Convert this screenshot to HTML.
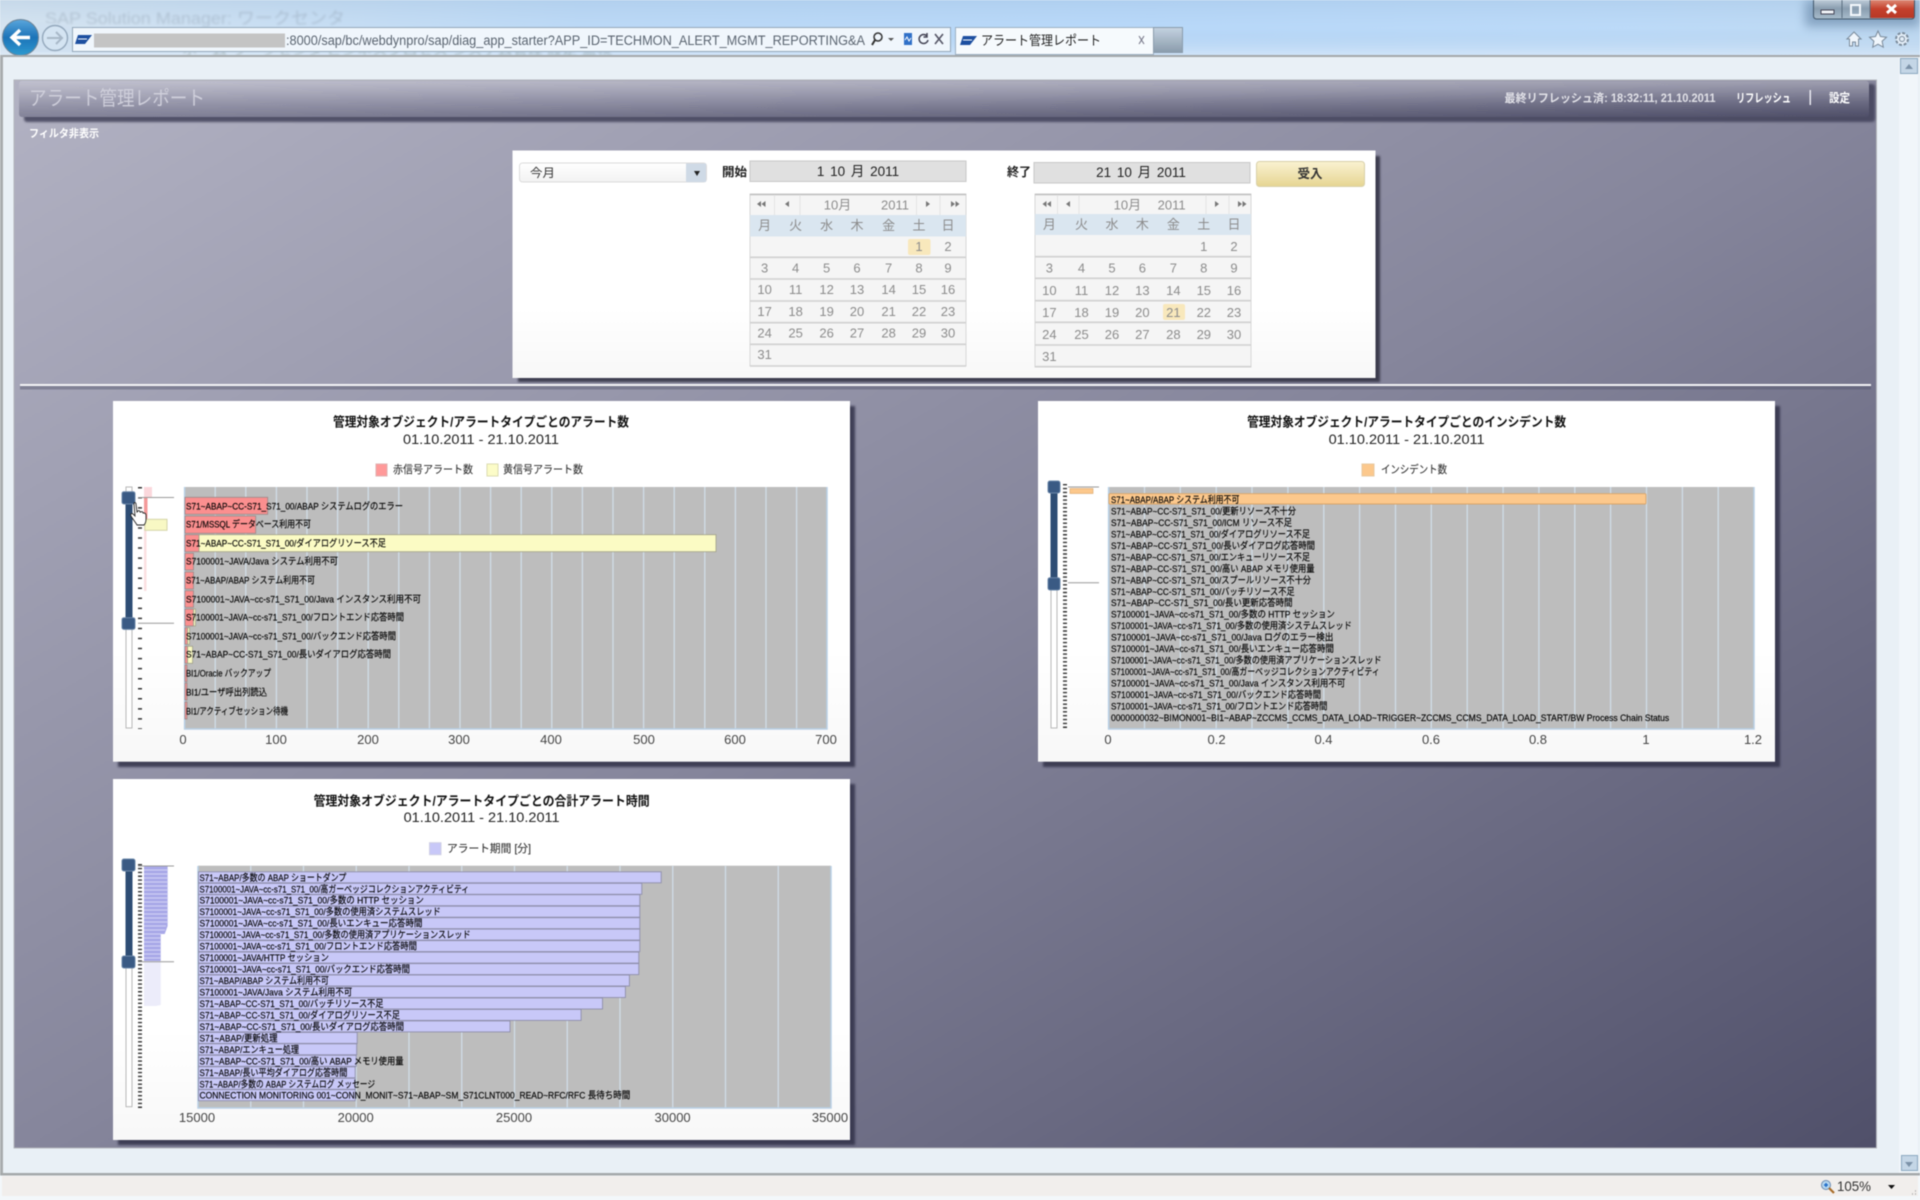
<!DOCTYPE html>
<html lang="ja">
<head>
<meta charset="utf-8">
<title>アラート管理レポート</title>
<style>
html,body{margin:0;padding:0;width:1920px;height:1200px;overflow:hidden;background:#f2f6fa}
svg{display:block;filter:blur(.5px);font-family:"Liberation Sans","Noto Sans CJK JP",sans-serif}
.lab text{font-size:9.5px;fill:#000;stroke:#000;stroke-width:.14}
.ax text{font-size:13px;fill:#444;text-anchor:middle}
.cal text{font-size:13px;fill:#8c8c8c;text-anchor:middle}
.ttl{font-size:13px;font-weight:bold;fill:#111;text-anchor:middle}
.dt{font-size:13.5px;fill:#222;text-anchor:middle}
.lg{font-size:11px;fill:#333;stroke:#333;stroke-width:.12}
</style>
</head>
<body>
<svg xmlns="http://www.w3.org/2000/svg" width="1920" height="1200" viewBox="0 0 1920 1200">
<defs>
<linearGradient id="sky" x1="0" y1="0" x2="1" y2="0"><stop offset="0" stop-color="#d6e4f0"/><stop offset=".3" stop-color="#bcd9f6"/><stop offset=".6" stop-color="#b8d8f9"/><stop offset=".85" stop-color="#bcdaf8"/><stop offset="1" stop-color="#c0daf2"/></linearGradient>
<linearGradient id="skyv" x1="0" y1="0" x2="0" y2="1"><stop offset="0" stop-color="#8fb0d0" stop-opacity=".22"/><stop offset=".5" stop-color="#9fc0e0" stop-opacity="0"/><stop offset="1" stop-color="#e6f0fb" stop-opacity=".55"/></linearGradient>
<linearGradient id="panel" x1="0" y1="0" x2="1" y2="1"><stop offset="0" stop-color="#b2b2c3"/><stop offset=".5" stop-color="#86869c"/><stop offset="1" stop-color="#50506a"/></linearGradient>
<linearGradient id="bar" x1="0" y1="0" x2="0" y2="1"><stop offset="0" stop-color="#fff" stop-opacity=".2"/><stop offset=".55" stop-color="#fff" stop-opacity=".04"/><stop offset="1" stop-color="#000" stop-opacity=".02"/></linearGradient>
<linearGradient id="card" x1="0" y1="0" x2="0" y2="1"><stop offset="0" stop-color="#fff"/><stop offset=".7" stop-color="#fff"/><stop offset="1" stop-color="#f8f8f8"/></linearGradient>
<linearGradient id="btn" x1="0" y1="0" x2="0" y2="1"><stop offset="0" stop-color="#faf2d2"/><stop offset="1" stop-color="#e6d592"/></linearGradient>
<linearGradient id="back" x1="0" y1="0" x2="0" y2="1"><stop offset="0" stop-color="#5aa6dc"/><stop offset=".5" stop-color="#1c74b8"/><stop offset="1" stop-color="#2e9ad0"/></linearGradient>
<linearGradient id="stub" x1="0" y1="0" x2="0" y2="1"><stop offset="0" stop-color="#c4d2e0"/><stop offset="1" stop-color="#8a9cac"/></linearGradient>
<linearGradient id="close" x1="0" y1="0" x2="0" y2="1"><stop offset="0" stop-color="#dc8874"/><stop offset=".5" stop-color="#c4402c"/><stop offset="1" stop-color="#b83826"/></linearGradient>
<linearGradient id="winb" x1="0" y1="0" x2="0" y2="1"><stop offset="0" stop-color="#c8d6e2"/><stop offset=".5" stop-color="#8a9eb0"/><stop offset="1" stop-color="#a8bccc"/></linearGradient>
<linearGradient id="sel" x1="0" y1="0" x2="0" y2="1"><stop offset="0" stop-color="#fff"/><stop offset="1" stop-color="#f2f2f2"/></linearGradient>
<filter id="b1" x="-10%" y="-10%" width="120%" height="120%"><feGaussianBlur stdDeviation="2"/></filter>
<filter id="b2" x="-20%" y="-100%" width="140%" height="300%"><feGaussianBlur stdDeviation="1.1"/></filter>
<filter id="b3" x="-50%" y="-50%" width="200%" height="200%"><feGaussianBlur stdDeviation="5"/></filter>
</defs>

<!-- browser chrome -->
<rect width="1920" height="56" fill="url(#sky)"/>
<rect width="1920" height="56" fill="url(#skyv)"/>
<text x="45" y="24" font-size="17" fill="#7c8a9a" opacity=".32" filter="url(#b2)" textLength="300" lengthAdjust="spacingAndGlyphs">SAP Solution Manager: ワークセンタ</text>
<text x="182" y="55" font-size="13" fill="#5a6a5a" opacity=".35" filter="url(#b2)" textLength="430" lengthAdjust="spacingAndGlyphs">ホーム  ワークセンタ  ビジネスプロセス  システム管理  設定  監視</text>
<rect x="1805" y="0" width="115" height="27" fill="#5a7a9c" opacity=".55" filter="url(#b3)"/>
<g>
<rect x="1813.500" y="-2" width="101" height="21" rx="3" fill="url(#winb)" stroke="#42586c"/>
<rect x="1870" y="0" width="44" height="18" fill="url(#close)"/>
<path d="M1842 0v18M1870 0v18" stroke="#5a6e80"/>
<rect x="1821" y="10" width="13" height="4" fill="#f0f4f8" stroke="#445"/>
<rect x="1851" y="5" width="9" height="10" fill="none" stroke="#f4f8fc" stroke-width="2"/>
<path d="M1887 5l9 8M1896 5l-9 8" stroke="#fff" stroke-width="3"/>
</g>
<!-- nav buttons -->
<path d="M38 22Q60 24 73 27V52H30z" fill="#cfe0f0" opacity=".7"/>
<circle cx="20.500" cy="37.500" r="18" fill="url(#back)" stroke="#6f8496"/>
<path d="M30 37.500H14M20 30l-8 7.500 8 7.500" fill="none" stroke="#fff" stroke-width="3.400"/>
<circle cx="55" cy="38" r="12.500" fill="#d4e4f2" stroke="#94a8bc" stroke-width="1.400"/>
<path d="M47 38H62M56 32l6 6-6 6" fill="none" stroke="#a8b8c8" stroke-width="2"/>
<!-- address bar -->
<rect x="72.500" y="27.500" width="878" height="24" fill="#f0f6fc" stroke="#94a8ba"/>
<path d="M75 44l3-9h14l-7 9z" fill="#1c4fa0"/>
<path d="M78 39h9" stroke="#fff"/>
<rect x="94" y="33.500" width="191" height="14" fill="#c4c4c4"/>
<text x="286" y="45" font-size="13.500" fill="#5a6470" textLength="579" lengthAdjust="spacingAndGlyphs">:8000/sap/bc/webdynpro/sap/diag_app_starter?APP_ID=TECHMON_ALERT_MGMT_REPORTING&amp;A</text>
<circle cx="878" cy="37" r="4" fill="none" stroke="#333" stroke-width="1.500"/><path d="M875 40l-3 5" stroke="#333" stroke-width="2"/>
<path d="M888 38h6l-3 3z" fill="#555"/>
<rect x="904" y="33" width="8" height="12" fill="#3070c8"/>
<path d="M905 40l2-3 2 4 2-3" stroke="#fff" fill="none"/>
<path d="M927 36a4.500 4.500 0 1 0 1 4M927 33v4h-3.500" fill="none" stroke="#445" stroke-width="1.500"/>
<path d="M935 34l8 10M943 34l-8 10" stroke="#556" stroke-width="1.600"/>
<!-- tab -->
<rect x="955.500" y="27.500" width="198" height="27" fill="#f6fafd" stroke="#9cb0c4"/>
<rect x="1153.500" y="27.500" width="29" height="25" fill="url(#stub)" stroke="#8a9cac"/>
<path d="M960 45l3-9h14l-7 9z" fill="#1c4fa0"/><path d="M963 40h9" stroke="#fff"/>
<text x="981" y="45" font-size="13" fill="#222" textLength="120" lengthAdjust="spacingAndGlyphs">アラート管理レポート</text>
<path d="M1139 36l5 8M1144 36l-5 8" stroke="#778" stroke-width="1.100"/>
<!-- right icons -->
<path d="M1854 32l-7 7h2.500v7h3v-4h3v4h3v-7h2.500z" fill="#f0f6fc" stroke="#7a8a9a"/>
<path d="M1878 31l2.500 5.500 6 .7-4.400 4 1.200 6-5.300-3-5.300 3 1.200-6-4.400-4 6-.7z" fill="#f0f6fc" stroke="#7a8a9a"/>
<circle cx="1902" cy="39" r="6" fill="#e4eef8" stroke="#7a8a9a" stroke-width="2" stroke-dasharray="3 1.700"/><circle cx="1902" cy="39" r="2.500" fill="none" stroke="#7a8a9a"/>

<!-- content area -->
<rect x="0" y="56" width="1920" height="1118" fill="#e9f0f6"/>
<rect x="0" y="55" width="1920" height="2" fill="#a4a8aa"/>
<rect x="0" y="55" width="3" height="1120" fill="#a8acae"/>
<rect x="0" y="1173" width="1920" height="2.500" fill="#a4a8aa"/>
<rect x="1899" y="57" width="19" height="1116" fill="#f1f6fa"/>
<rect x="1900.500" y="58.500" width="17" height="15" fill="#c4d6e6" stroke="#8ca8c0"/>
<path d="M1905 69l4-5 4 5z" fill="#7c92a8"/>
<rect x="1901.500" y="1155.500" width="16" height="15" fill="#c4d6e6" stroke="#8ca8c0"/>
<path d="M1905 1162l4 5 4-5z" fill="#7c92a8"/>
<!-- status bar -->
<rect x="0" y="1175.500" width="1920" height="24.500" fill="#f3f7fa"/>
<rect x="2" y="1176" width="1916" height="20" fill="#f1eeec"/>
<circle cx="1826" cy="1185" r="4.500" fill="#b8d8f0" stroke="#6a8ab0"/><path d="M1824 1185h4M1826 1183v4" stroke="#1c6ac8" stroke-width="1.500"/><path d="M1829 1188l5 5" stroke="#a86c28" stroke-width="2.200"/>
<text x="1837" y="1191" font-size="14" fill="#333" textLength="34" lengthAdjust="spacingAndGlyphs">105%</text>
<path d="M1888 1185h7l-3.500 4z" fill="#111"/>
<path d="M1912 1194h1M1915 1194h1M1915 1191h1" stroke="#aaa" stroke-width="1.500"/>

<!-- main panel -->
<rect x="14" y="80" width="1862.500" height="1068" fill="url(#panel)" stroke="#b4b6bc" stroke-width="1"/>
<rect x="24" y="84" width="1851" height="38" rx="3" fill="#42425a" opacity=".85" filter="url(#b2)"/>
<rect x="19" y="81" width="1850" height="36" rx="3" fill="url(#panel)"/>
<rect x="19" y="81" width="1850" height="36" rx="3" fill="url(#bar)"/>
<text x="29" y="105" font-size="20" fill="#cfcfdb" textLength="176" lengthAdjust="spacingAndGlyphs">アラート管理レポート</text>
<text x="1504.500" y="102" font-size="11.500" font-weight="bold" fill="#e2e2e8" textLength="211" lengthAdjust="spacingAndGlyphs">最終リフレッシュ済: 18:32:11, 21.10.2011</text>
<text x="1736" y="102" font-size="12" font-weight="bold" fill="#fff" textLength="55" lengthAdjust="spacingAndGlyphs">リフレッシュ</text>
<rect x="1809.500" y="90" width="1.500" height="15" fill="#e8e8f0"/>
<text x="1829" y="102" font-size="12" font-weight="bold" fill="#fff" textLength="21" lengthAdjust="spacingAndGlyphs">設定</text>
<text x="29" y="137" font-size="11" font-weight="bold" fill="#fff" textLength="70" lengthAdjust="spacingAndGlyphs">フィルタ非表示</text>

<!-- filter card -->
<rect x="518" y="156" width="862" height="226" fill="#2e2e40" opacity=".85" filter="url(#b2)"/>
<rect x="512.500" y="150.500" width="863" height="227.500" fill="url(#card)"/>
<rect x="519.500" y="163" width="187" height="19" rx="3" fill="url(#sel)" stroke="#dcdcdc"/>
<rect x="686" y="163.500" width="20" height="18.500" fill="#cfdae6"/>
<path d="M694 171h6l-3 5z" fill="#222"/>
<text x="530" y="177" font-size="12" fill="#333" textLength="25" lengthAdjust="spacingAndGlyphs">今月</text>
<text x="722" y="176" font-size="12" font-weight="bold" fill="#222" textLength="25" lengthAdjust="spacingAndGlyphs">開始</text>
<rect x="750" y="161" width="216" height="20.500" fill="#e0e0e0" stroke="#c8c8c8"/>
<text x="858" y="176" font-size="13.500" fill="#222" text-anchor="middle" style="word-spacing:2px">1 10 月 2011</text>
<text x="1007" y="176" font-size="12" font-weight="bold" fill="#222" textLength="24" lengthAdjust="spacingAndGlyphs">終了</text>
<rect x="1034" y="162.500" width="216" height="20.500" fill="#e0e0e0" stroke="#c8c8c8"/>
<text x="1141" y="177" font-size="13.500" fill="#222" text-anchor="middle" style="word-spacing:2px">21 10 月 2011</text>
<rect x="1256.500" y="161.500" width="108" height="25" rx="3" fill="url(#btn)" stroke="#d8d0a8"/>
<text x="1310" y="178" font-size="12.500" font-weight="bold" fill="#333" text-anchor="middle">受入</text>

<!-- calendar 1 -->
<g class="cal">
<rect x="750" y="194" width="216" height="172" fill="#f5f5f5" stroke="#d8d8d8"/>
<rect x="750" y="215" width="216" height="21.500" fill="#dae6f0"/>
<path d="M750 194.500H966" stroke="#c0c0c0" stroke-width="1.500"/>
<path d="M750 257.300H966M750 279H966M750 301H966M750 322.700H966M750 344.300H966M750 366H966" stroke="#d0d0d0" stroke-width="1.600"/>
<path d="M774.500 195v20M800 195v20M916.500 195v20M940 195v20" stroke="#e4e4e4"/>
<rect x="908" y="239" width="22.500" height="16" rx="2" fill="#f8e8bc"/>
<path d="M761 201v6l-4-3zM765.500 201v6l-4-3zM789 201v6l-4-3zM926 201v6l4-3zM951 201v6l4-3zM955.500 201v6l4-3z" fill="#777"/>
<text x="837.500" y="209.500">10月</text><text x="895" y="209.500">2011</text>
<text y="230"><tspan x="764.600">月</tspan><tspan x="795.600">火</tspan><tspan x="826.600">水</tspan><tspan x="857">木</tspan><tspan x="888.600">金</tspan><tspan x="919">土</tspan><tspan x="948">日</tspan></text>
<text y="251"><tspan x="919">1</tspan><tspan x="948">2</tspan></text>
<text y="272.500"><tspan x="764.600">3</tspan><tspan x="795.600">4</tspan><tspan x="826.600">5</tspan><tspan x="857">6</tspan><tspan x="888.600">7</tspan><tspan x="919">8</tspan><tspan x="948">9</tspan></text>
<text y="294"><tspan x="764.600">10</tspan><tspan x="795.600">11</tspan><tspan x="826.600">12</tspan><tspan x="857">13</tspan><tspan x="888.600">14</tspan><tspan x="919">15</tspan><tspan x="948">16</tspan></text>
<text y="316"><tspan x="764.600">17</tspan><tspan x="795.600">18</tspan><tspan x="826.600">19</tspan><tspan x="857">20</tspan><tspan x="888.600">21</tspan><tspan x="919">22</tspan><tspan x="948">23</tspan></text>
<text y="337.500"><tspan x="764.600">24</tspan><tspan x="795.600">25</tspan><tspan x="826.600">26</tspan><tspan x="857">27</tspan><tspan x="888.600">28</tspan><tspan x="919">29</tspan><tspan x="948">30</tspan></text>
<text y="359"><tspan x="764.600">31</tspan></text>
</g>
<!-- calendar 2 -->
<g class="cal">
<rect x="1035" y="194" width="216" height="173" fill="#f5f5f5" stroke="#d8d8d8"/>
<rect x="1035" y="214" width="216" height="21" fill="#dae6f0"/>
<path d="M1035 194.500H1251" stroke="#c0c0c0" stroke-width="1.500"/>
<path d="M1035 256.700H1251M1035 278.300H1251M1035 300.700H1251M1035 322.300H1251M1035 345H1251M1035 366.700H1251" stroke="#d0d0d0" stroke-width="1.600"/>
<path d="M1057.500 195v19M1079 195v19M1206 195v19M1229 195v19" stroke="#e4e4e4"/>
<rect x="1163" y="304" width="22" height="16" rx="2" fill="#f8e8bc"/>
<path d="M1046.500 201v6l-4-3zM1051 201v6l-4-3zM1070 201v6l-4-3zM1215 201v6l4-3zM1238 201v6l4-3zM1242.500 201v6l4-3z" fill="#777"/>
<text x="1127.400" y="209.500">10月</text><text x="1171.600" y="209.500">2011</text>
<text y="229"><tspan x="1049.400">月</tspan><tspan x="1081.500">火</tspan><tspan x="1112">水</tspan><tspan x="1142.400">木</tspan><tspan x="1173.400">金</tspan><tspan x="1203.800">土</tspan><tspan x="1234">日</tspan></text>
<text y="251"><tspan x="1203.800">1</tspan><tspan x="1234">2</tspan></text>
<text y="272.500"><tspan x="1049.400">3</tspan><tspan x="1081.500">4</tspan><tspan x="1112">5</tspan><tspan x="1142.400">6</tspan><tspan x="1173.400">7</tspan><tspan x="1203.800">8</tspan><tspan x="1234">9</tspan></text>
<text y="295"><tspan x="1049.400">10</tspan><tspan x="1081.500">11</tspan><tspan x="1112">12</tspan><tspan x="1142.400">13</tspan><tspan x="1173.400">14</tspan><tspan x="1203.800">15</tspan><tspan x="1234">16</tspan></text>
<text y="317"><tspan x="1049.400">17</tspan><tspan x="1081.500">18</tspan><tspan x="1112">19</tspan><tspan x="1142.400">20</tspan><tspan x="1173.400">21</tspan><tspan x="1203.800">22</tspan><tspan x="1234">23</tspan></text>
<text y="339"><tspan x="1049.400">24</tspan><tspan x="1081.500">25</tspan><tspan x="1112">26</tspan><tspan x="1142.400">27</tspan><tspan x="1173.400">28</tspan><tspan x="1203.800">29</tspan><tspan x="1234">30</tspan></text>
<text y="361"><tspan x="1049.400">31</tspan></text>
</g>

<!-- divider -->
<rect x="20" y="385.500" width="1851" height="4" fill="#55566c" opacity=".45"/>
<rect x="20" y="384" width="1851" height="2" fill="#f4f4f6"/>

<!-- chart 1 -->
<rect x="118" y="406" width="737" height="361" fill="#30304a" opacity=".85" filter="url(#b2)"/>
<rect x="113" y="401" width="737" height="360.700" fill="url(#card)"/>
<text class="ttl" x="481" y="426.500" textLength="296" lengthAdjust="spacingAndGlyphs">管理対象オブジェクト/アラートタイプごとのアラート数</text>
<text class="dt" x="481" y="444" textLength="156" lengthAdjust="spacingAndGlyphs">01.10.2011 - 21.10.2011</text>
<rect x="376" y="464" width="11" height="12" fill="#f99" stroke="#e0b0b0"/>
<text class="lg" x="393" y="473" textLength="80" lengthAdjust="spacingAndGlyphs">赤信号アラート数</text>
<rect x="487" y="464" width="11" height="12" fill="#fcfcc8" stroke="#dcdcb0"/>
<text class="lg" x="503" y="473" textLength="80" lengthAdjust="spacingAndGlyphs">黄信号アラート数</text>
<rect x="184.600" y="487" width="642.400" height="242" fill="#bdbdbd"/>
<path d="M215.200 487V729M245.800 487V729M276.400 487V729M307 487V729M337.600 487V729M368.200 487V729M398.800 487V729M429.400 487V729M460 487V729M490.600 487V729M521.200 487V729M551.800 487V729M582.400 487V729M613 487V729M643.600 487V729M674.200 487V729M704.800 487V729M735.400 487V729M766 487V729M796.600 487V729" stroke="#d0dde8" stroke-width="1.300"/>
<path d="M184.600 487V729H827V487" fill="none" stroke="#b8d0e6" stroke-width="1.500"/>
<g stroke="#9a8888" stroke-width=".8" fill="#fb8f8f">
<rect x="185" y="497.300" width="82.700" height="17"/><rect x="185" y="516" width="70.700" height="17.300"/><rect x="185" y="534.700" width="14" height="17"/><rect x="185" y="553.300" width="8.500" height="16.700"/><rect x="185" y="572" width="8.500" height="17"/><rect x="185" y="590.700" width="8.500" height="16.600"/><rect x="185" y="609" width="8.500" height="17"/><rect x="185" y="627.700" width="2.600" height="16.600"/><rect x="185" y="646.300" width="2.600" height="17"/><rect x="185" y="665" width="2" height="16.700"/><rect x="185" y="683" width="2" height="17"/><rect x="185" y="702" width="2" height="17"/>
</g>
<g stroke="#a0a088" stroke-width=".8" fill="#fbfbc4">
<rect x="199" y="534.700" width="517" height="17"/><rect x="193.500" y="609" width="2" height="17"/><rect x="187.600" y="627.700" width="2" height="16.600"/><rect x="187.600" y="646.300" width="5" height="17"/>
</g>
<g class="lab">
<text x="186" y="509.500" textLength="217" lengthAdjust="spacingAndGlyphs">S71~ABAP~CC-S71_S71_00/ABAP システムログのエラー</text>
<text x="186" y="527.500" textLength="125" lengthAdjust="spacingAndGlyphs">S71/MSSQL データベース利用不可</text>
<text x="186" y="546.500" textLength="200" lengthAdjust="spacingAndGlyphs">S71~ABAP~CC-S71_S71_00/ダイアログリソース不足</text>
<text x="186" y="564.500" textLength="152" lengthAdjust="spacingAndGlyphs">S7100001~JAVA/Java システム利用不可</text>
<text x="186" y="583.500" textLength="129" lengthAdjust="spacingAndGlyphs">S71~ABAP/ABAP システム利用不可</text>
<text x="186" y="602.500" textLength="235" lengthAdjust="spacingAndGlyphs">S7100001~JAVA~cc-s71_S71_00/Java インスタンス利用不可</text>
<text x="186" y="620.500" textLength="218" lengthAdjust="spacingAndGlyphs">S7100001~JAVA~cc-s71_S71_00/フロントエンド応答時間</text>
<text x="186" y="639.500" textLength="210" lengthAdjust="spacingAndGlyphs">S7100001~JAVA~cc-s71_S71_00/バックエンド応答時間</text>
<text x="186" y="657.500" textLength="205" lengthAdjust="spacingAndGlyphs">S71~ABAP~CC-S71_S71_00/長いダイアログ応答時間</text>
<text x="186" y="676.500" textLength="85" lengthAdjust="spacingAndGlyphs">BI1/Oracle バックアップ</text>
<text x="186" y="695.500" textLength="81" lengthAdjust="spacingAndGlyphs">BI1/ユーザ呼出列読込</text>
<text x="186" y="714.500" textLength="102" lengthAdjust="spacingAndGlyphs">BI1/アクティブセッション待機</text>
</g>
<g class="ax"><text x="183" y="744">0</text><text x="276" y="744">100</text><text x="368" y="744">200</text><text x="459" y="744">300</text><text x="551" y="744">400</text><text x="644" y="744">500</text><text x="735" y="744">600</text><text x="826" y="744">700</text></g>
<!-- slider 1 -->
<path d="M144 487h8v10h-8z" fill="#fbd8dc"/>
<path d="M144 497h3.500v24H144z" fill="#f39a9a"/>
<path d="M144 521h2.500v70H144z" fill="#fbe0e2"/>
<rect x="144.800" y="519.300" width="22.200" height="11" fill="#f8f8c4" stroke="#d4d4a8"/>
<rect x="126" y="487" width="6" height="241" fill="#fff" stroke="#b8b8b8"/>
<rect x="125.500" y="498" width="7" height="125" fill="#2e4d74"/>
<path d="M140 487V729" stroke="#333" stroke-width="4" stroke-dasharray="1.500 8.550"/>
<path d="M138 497.500H174M138 623.300H174" stroke="#9a9a9a" stroke-width="1"/>
<rect x="122" y="491.700" width="13" height="12.300" rx="2" fill="#3a5a84" stroke="#6a86a8"/>
<rect x="122" y="617.700" width="13" height="11.700" rx="2" fill="#3a5a84" stroke="#6a86a8"/>
<path d="M134 503c1-1 2 0 2 1l1 8 1-1c1-1 2 0 2 1l1 0c1-1 2 0 2 1l1 0c1 0 2 1 2 2l0 4c0 3-1 5-2 6h-7c-1-2-5-7-6-9-1-2 1-3 2-2l2 2-1-12c0-1 .5-1.500 1-1.500z" fill="#fff" stroke="#222" stroke-width=".9"/>

<!-- chart 2 -->
<rect x="1043" y="406" width="737" height="361" fill="#30304a" opacity=".85" filter="url(#b2)"/>
<rect x="1038" y="401" width="737" height="360.700" fill="url(#card)"/>
<text class="ttl" x="1406.600" y="426.500" textLength="319" lengthAdjust="spacingAndGlyphs">管理対象オブジェクト/アラートタイプごとのインシデント数</text>
<text class="dt" x="1406.600" y="444" textLength="156" lengthAdjust="spacingAndGlyphs">01.10.2011 - 21.10.2011</text>
<rect x="1362" y="464" width="12" height="12" fill="#fcc88c" stroke="#e8c8a0"/>
<text class="lg" x="1381" y="473" textLength="66" lengthAdjust="spacingAndGlyphs">インシデント数</text>
<rect x="1108.600" y="487" width="645.400" height="242" fill="#bdbdbd"/>
<path d="M1144.500 487V729M1180.300 487V729M1216.200 487V729M1252 487V729M1287.900 487V729M1323.800 487V729M1359.600 487V729M1395.500 487V729M1431.300 487V729M1467.200 487V729M1503.100 487V729M1538.900 487V729M1574.800 487V729M1610.600 487V729M1646.500 487V729M1682.400 487V729M1718.200 487V729" stroke="#d0dde8" stroke-width="1.300"/>
<path d="M1108.600 487V729H1754V487" fill="none" stroke="#b8d0e6" stroke-width="1.500"/>
<rect x="1109" y="493.700" width="537" height="10.300" rx="1" fill="#fcc88c" stroke="#d8a468" stroke-width=".9"/>
<g class="lab">
<text x="1111" y="503" textLength="128.400" lengthAdjust="spacingAndGlyphs">S71~ABAP/ABAP システム利用不可</text>
<text x="1111" y="514.500" textLength="185" lengthAdjust="spacingAndGlyphs">S71~ABAP~CC-S71_S71_00/更新リソース不十分</text>
<text x="1111" y="526" textLength="181" lengthAdjust="spacingAndGlyphs">S71~ABAP~CC-S71_S71_00/ICM リソース不足</text>
<text x="1111" y="537.400" textLength="199" lengthAdjust="spacingAndGlyphs">S71~ABAP~CC-S71_S71_00/ダイアログリソース不足</text>
<text x="1111" y="548.900" textLength="204" lengthAdjust="spacingAndGlyphs">S71~ABAP~CC-S71_S71_00/長いダイアログ応答時間</text>
<text x="1111" y="560.400" textLength="199" lengthAdjust="spacingAndGlyphs">S71~ABAP~CC-S71_S71_00/エンキューリソース不足</text>
<text x="1111" y="571.800" textLength="203.500" lengthAdjust="spacingAndGlyphs">S71~ABAP~CC-S71_S71_00/高い ABAP メモリ使用量</text>
<text x="1111" y="583.300" textLength="200" lengthAdjust="spacingAndGlyphs">S71~ABAP~CC-S71_S71_00/スプールリソース不十分</text>
<text x="1111" y="594.800" textLength="183.600" lengthAdjust="spacingAndGlyphs">S71~ABAP~CC-S71_S71_00/バッチリソース不足</text>
<text x="1111" y="606.200" textLength="181.600" lengthAdjust="spacingAndGlyphs">S71~ABAP~CC-S71_S71_00/長い更新応答時間</text>
<text x="1111" y="617.700" textLength="223.900" lengthAdjust="spacingAndGlyphs">S7100001~JAVA~cc-s71_S71_00/多数の HTTP セッション</text>
<text x="1111" y="629.200" textLength="240.800" lengthAdjust="spacingAndGlyphs">S7100001~JAVA~cc-s71_S71_00/多数の使用済システムスレッド</text>
<text x="1111" y="640.600" textLength="222.400" lengthAdjust="spacingAndGlyphs">S7100001~JAVA~cc-s71_S71_00/Java ログのエラー検出</text>
<text x="1111" y="652.100" textLength="222.900" lengthAdjust="spacingAndGlyphs">S7100001~JAVA~cc-s71_S71_00/長いエンキュー応答時間</text>
<text x="1111" y="663.600" textLength="270.600" lengthAdjust="spacingAndGlyphs">S7100001~JAVA~cc-s71_S71_00/多数の使用済アプリケーションスレッド</text>
<text x="1111" y="675" textLength="268.700" lengthAdjust="spacingAndGlyphs">S7100001~JAVA~cc-s71_S71_00/高ガーベッジコレクションアクティビティ</text>
<text x="1111" y="686.500" textLength="234.300" lengthAdjust="spacingAndGlyphs">S7100001~JAVA~cc-s71_S71_00/Java インスタンス利用不可</text>
<text x="1111" y="698" textLength="210" lengthAdjust="spacingAndGlyphs">S7100001~JAVA~cc-s71_S71_00/バックエンド応答時間</text>
<text x="1111" y="709.400" textLength="216.400" lengthAdjust="spacingAndGlyphs">S7100001~JAVA~cc-s71_S71_00/フロントエンド応答時間</text>
<text x="1111" y="720.900" textLength="558.200" lengthAdjust="spacingAndGlyphs">0000000032~BIMON001~BI1~ABAP~ZCCMS_CCMS_DATA_LOAD~TRIGGER~ZCCMS_CCMS_DATA_LOAD_START/BW Process Chain Status</text>
</g>
<g class="ax"><text x="1108" y="744">0</text><text x="1216.600" y="744">0.2</text><text x="1323.500" y="744">0.4</text><text x="1431" y="744">0.6</text><text x="1538" y="744">0.8</text><text x="1646" y="744">1</text><text x="1753" y="744">1.2</text></g>
<!-- slider 2 -->
<rect x="1070" y="488.500" width="23" height="5" fill="#fcc88c" stroke="#d8a468" stroke-width=".6"/>
<rect x="1051" y="483" width="6" height="245" fill="#fff" stroke="#b8b8b8"/>
<rect x="1050.500" y="490" width="7" height="90" fill="#2e4d74"/>
<path d="M1065 484V729" stroke="#333" stroke-width="4" stroke-dasharray="1.400 2.450"/>
<path d="M1068 487H1099M1068 582.700H1099" stroke="#9a9a9a" stroke-width="1"/>
<rect x="1048" y="481" width="12" height="12" rx="2" fill="#3a5a84" stroke="#6a86a8"/>
<rect x="1048" y="577.700" width="12" height="12.300" rx="2" fill="#3a5a84" stroke="#6a86a8"/>

<!-- chart 3 -->
<rect x="118" y="784" width="737" height="361" fill="#30304a" opacity=".85" filter="url(#b2)"/>
<rect x="113" y="779" width="737" height="361" fill="url(#card)"/>
<text class="ttl" x="481.600" y="805.500" textLength="336" lengthAdjust="spacingAndGlyphs">管理対象オブジェクト/アラートタイプごとの合計アラート時間</text>
<text class="dt" x="481.600" y="822" textLength="156" lengthAdjust="spacingAndGlyphs">01.10.2011 - 21.10.2011</text>
<rect x="429.500" y="842.700" width="11.500" height="12" fill="#c8c8f8" stroke="#d0d0e4"/>
<text class="lg" x="447" y="852" textLength="84" lengthAdjust="spacingAndGlyphs">アラート期間 [分]</text>
<rect x="198" y="865.700" width="633" height="242" fill="#bdbdbd"/>
<path d="M250.750 866V1108M303.500 866V1108M356.250 866V1108M409 866V1108M461.750 866V1108M514.500 866V1108M567.250 866V1108M620 866V1108M672.750 866V1108M725.500 866V1108M778.250 866V1108" stroke="#d0dde8" stroke-width="1.300"/>
<path d="M198 866V1108H831V866" fill="none" stroke="#b8d0e6" stroke-width="1.500"/>
<g fill="#c8c8f8" stroke="#8e8eaa" stroke-width=".9">
<rect x="198.500" y="871.800" width="462.700" height="11"/>
<rect x="198.500" y="883.300" width="443.300" height="11"/>
<rect x="198.500" y="894.700" width="441.300" height="11"/>
<rect x="198.500" y="906.200" width="441.300" height="11"/>
<rect x="198.500" y="917.700" width="441.300" height="11"/>
<rect x="198.500" y="929.100" width="441.300" height="11"/>
<rect x="198.500" y="940.600" width="441.300" height="11"/>
<rect x="198.500" y="952.100" width="440.300" height="11"/>
<rect x="198.500" y="963.600" width="440.300" height="11"/>
<rect x="198.500" y="975" width="430.900" height="11"/>
<rect x="198.500" y="986.500" width="426.900" height="11"/>
<rect x="198.500" y="998" width="404" height="11"/>
<rect x="198.500" y="1009.400" width="382.600" height="11"/>
<rect x="198.500" y="1020.900" width="311.500" height="11"/>
<rect x="198.500" y="1032.400" width="158.700" height="11"/>
<rect x="198.500" y="1043.800" width="158.200" height="11"/>
<rect x="198.500" y="1055.300" width="157.700" height="11"/>
<rect x="198.500" y="1066.800" width="156.700" height="11"/>
<rect x="198.500" y="1078.300" width="156.700" height="11"/>
<rect x="198.500" y="1089.700" width="156.700" height="11"/>
</g>
<g class="lab">
<text x="199.500" y="880.800" textLength="146.800" lengthAdjust="spacingAndGlyphs">S71~ABAP/多数の ABAP ショートダンプ</text>
<text x="199.500" y="892.300" textLength="269.700" lengthAdjust="spacingAndGlyphs">S7100001~JAVA~cc-s71_S71_00/高ガーベッジコレクションアクティビティ</text>
<text x="199.500" y="903.700" textLength="224.400" lengthAdjust="spacingAndGlyphs">S7100001~JAVA~cc-s71_S71_00/多数の HTTP セッション</text>
<text x="199.500" y="915.200" textLength="241.300" lengthAdjust="spacingAndGlyphs">S7100001~JAVA~cc-s71_S71_00/多数の使用済システムスレッド</text>
<text x="199.500" y="926.700" textLength="222.900" lengthAdjust="spacingAndGlyphs">S7100001~JAVA~cc-s71_S71_00/長いエンキュー応答時間</text>
<text x="199.500" y="938.100" textLength="271.100" lengthAdjust="spacingAndGlyphs">S7100001~JAVA~cc-s71_S71_00/多数の使用済アプリケーションスレッド</text>
<text x="199.500" y="949.600" textLength="217.400" lengthAdjust="spacingAndGlyphs">S7100001~JAVA~cc-s71_S71_00/フロントエンド応答時間</text>
<text x="199.500" y="961.100" textLength="129.400" lengthAdjust="spacingAndGlyphs">S7100001~JAVA/HTTP セッション</text>
<text x="199.500" y="972.600" textLength="210.400" lengthAdjust="spacingAndGlyphs">S7100001~JAVA~cc-s71_S71_00/バックエンド応答時間</text>
<text x="199.500" y="984" textLength="129.400" lengthAdjust="spacingAndGlyphs">S71~ABAP/ABAP システム利用不可</text>
<text x="199.500" y="995.500" textLength="152.700" lengthAdjust="spacingAndGlyphs">S7100001~JAVA/Java システム利用不可</text>
<text x="199.500" y="1007" textLength="184" lengthAdjust="spacingAndGlyphs">S71~ABAP~CC-S71_S71_00/バッチリソース不足</text>
<text x="199.500" y="1018.400" textLength="200.500" lengthAdjust="spacingAndGlyphs">S71~ABAP~CC-S71_S71_00/ダイアログリソース不足</text>
<text x="199.500" y="1029.900" textLength="204.500" lengthAdjust="spacingAndGlyphs">S71~ABAP~CC-S71_S71_00/長いダイアログ応答時間</text>
<text x="199.500" y="1041.400" textLength="78" lengthAdjust="spacingAndGlyphs">S71~ABAP/更新処理</text>
<text x="199.500" y="1052.800" textLength="99.500" lengthAdjust="spacingAndGlyphs">S71~ABAP/エンキュー処理</text>
<text x="199.500" y="1064.300" textLength="204" lengthAdjust="spacingAndGlyphs">S71~ABAP~CC-S71_S71_00/高い ABAP メモリ使用量</text>
<text x="199.500" y="1075.800" textLength="147.800" lengthAdjust="spacingAndGlyphs">S71~ABAP/長い平均ダイアログ応答時間</text>
<text x="199.500" y="1087.300" textLength="175.600" lengthAdjust="spacingAndGlyphs">S71~ABAP/多数の ABAP システムログ メッセージ</text>
<text x="199.500" y="1098.700" textLength="430.800" lengthAdjust="spacingAndGlyphs">CONNECTION MONITORING 001~CONN_MONIT~S71~ABAP~SM_S71CLNT000_READ~RFC/RFC 長待ち時間</text>
</g>
<g class="ax"><text x="197" y="1122">15000</text><text x="355.700" y="1122">20000</text><text x="514" y="1122">25000</text><text x="672.600" y="1122">30000</text><text x="830" y="1122">35000</text></g>
<!-- slider 3 -->
<path d="M144 866H167.600V926L164.700 934H160.700V961H144z" fill="#a8a8e8"/>
<path d="M144 870h24M144 874h24M144 878h24M144 882h24M144 886h24M144 890h24M144 894h24M144 898h24M144 902h24M144 906h24M144 910h24M144 914h24M144 918h24M144 922h24M144 926h22M144 930h21M144 934h17M144 938h17M144 942h17M144 946h17M144 950h17M144 954h17M144 958h17" stroke="#d4d4f4" stroke-width=".9"/>
<path d="M144 962H160.700V1005L156 1006H144z" fill="#ececfa"/>
<rect x="126" y="863" width="6" height="243.700" fill="#fff" stroke="#b8b8b8"/>
<rect x="125.500" y="868" width="7" height="92" fill="#2e4d74"/>
<path d="M140 864V1108" stroke="#333" stroke-width="4" stroke-dasharray="1.400 2.450"/>
<path d="M138 866H174M138 961.700H174" stroke="#9a9a9a" stroke-width="1"/>
<rect x="122" y="859" width="13" height="12" rx="2" fill="#3a5a84" stroke="#6a86a8"/>
<rect x="122" y="956" width="13" height="12" rx="2" fill="#3a5a84" stroke="#6a86a8"/>
</svg>
</body>
</html>
